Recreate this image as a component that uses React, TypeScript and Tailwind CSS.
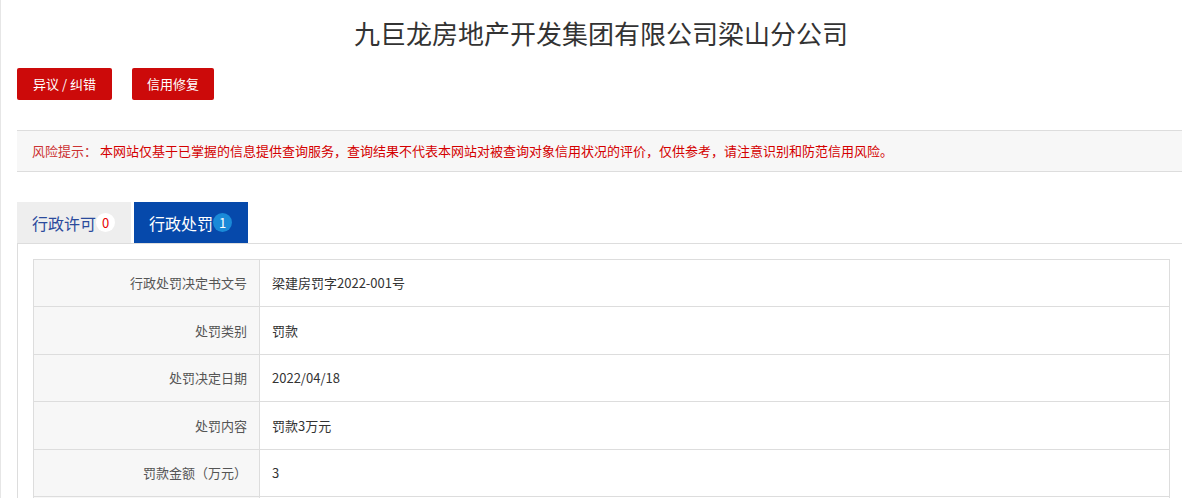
import React from "react";

const rows: [string, string][] = [
  ["行政处罚决定书文号", "梁建房罚字2022-001号"],
  ["处罚类别", "罚款"],
  ["处罚决定日期", "2022/04/18"],
  ["处罚内容", "罚款3万元"],
  ["罚款金额（万元）", "3"],
  ["", ""],
];

export default function App() {
  return (
    <div
      className="w-[1182px] h-[498px] overflow-hidden bg-white border-l border-[#e6e6e6]"
      style={{ fontFamily: '"Noto Sans CJK SC", "Noto Sans", sans-serif' }}
    >
      <div className="pl-[16px]">
        <div className="w-[1168px]">
          <div className="h-[68px] pt-[17px] text-center text-[26px] leading-[32px] text-[#333333]">
            九巨龙房地产开发集团有限公司梁山分公司
          </div>
          <div className="flex gap-[20px] h-[32px]">
            <button className="h-[32px] px-[16px] rounded-[2px] bg-[#cc0a0a] text-white text-[13px] leading-[32px]">
              异议 / 纠错
            </button>
            <button className="h-[32px] px-[15px] rounded-[2px] bg-[#cc0a0a] text-white text-[13px] leading-[32px]">
              信用修复
            </button>
          </div>
          <div className="mt-[30px] h-[42px] border-y border-[#dddddd] bg-[#f7f7f7] flex items-center pl-[15px] text-[13px]">
            <span className="text-[#cc3333]">风险提示：</span>
            <span className="ml-[3px] text-[#d40000]">
              本网站仅基于已掌握的信息提供查询服务，查询结果不代表本网站对被查询对象信用状况的评价，仅供参考，请注意识别和防范信用风险。
            </span>
          </div>
          <div className="mt-[30px] flex gap-[3px] h-[41px]">
            <div className="w-[114px] h-[41px] bg-[#eeeeee] flex items-center pl-[15px]">
              <span className="text-[16px] text-[#2a4a9c]">行政许可</span>
              <span className="w-[19px] h-[19px] rounded-full bg-white text-[#e60000] text-[13px] flex items-center justify-center">
                0
              </span>
            </div>
            <div className="w-[114px] h-[41px] bg-[#0649ab] flex items-center pl-[15px]">
              <span className="text-[16px] text-white">行政处罚</span>
              <span className="w-[19px] h-[19px] rounded-full bg-[#1a8ad8] text-white text-[13px] flex items-center justify-center">
                1
              </span>
            </div>
          </div>
          <div className="border-t border-l border-[#dddddd] p-[15px]">
            <div className="border border-[#dddddd] text-[13px]">
              {rows.map(([k, v], i) => (
                <div
                  key={i}
                  className={`flex h-[47.4px] ${i < rows.length - 1 ? "border-b border-[#dddddd]" : ""}`}
                >
                  <div className="w-[226px] bg-[#f7f7f7] border-r border-[#dddddd] flex items-center justify-end pr-[12px] text-[#555555]">
                    {k}
                  </div>
                  <div className="flex-1 flex items-center pl-[12px] text-[#333333]">{v}</div>
                </div>
              ))}
            </div>
          </div>
        </div>
      </div>
    </div>
  );
}
